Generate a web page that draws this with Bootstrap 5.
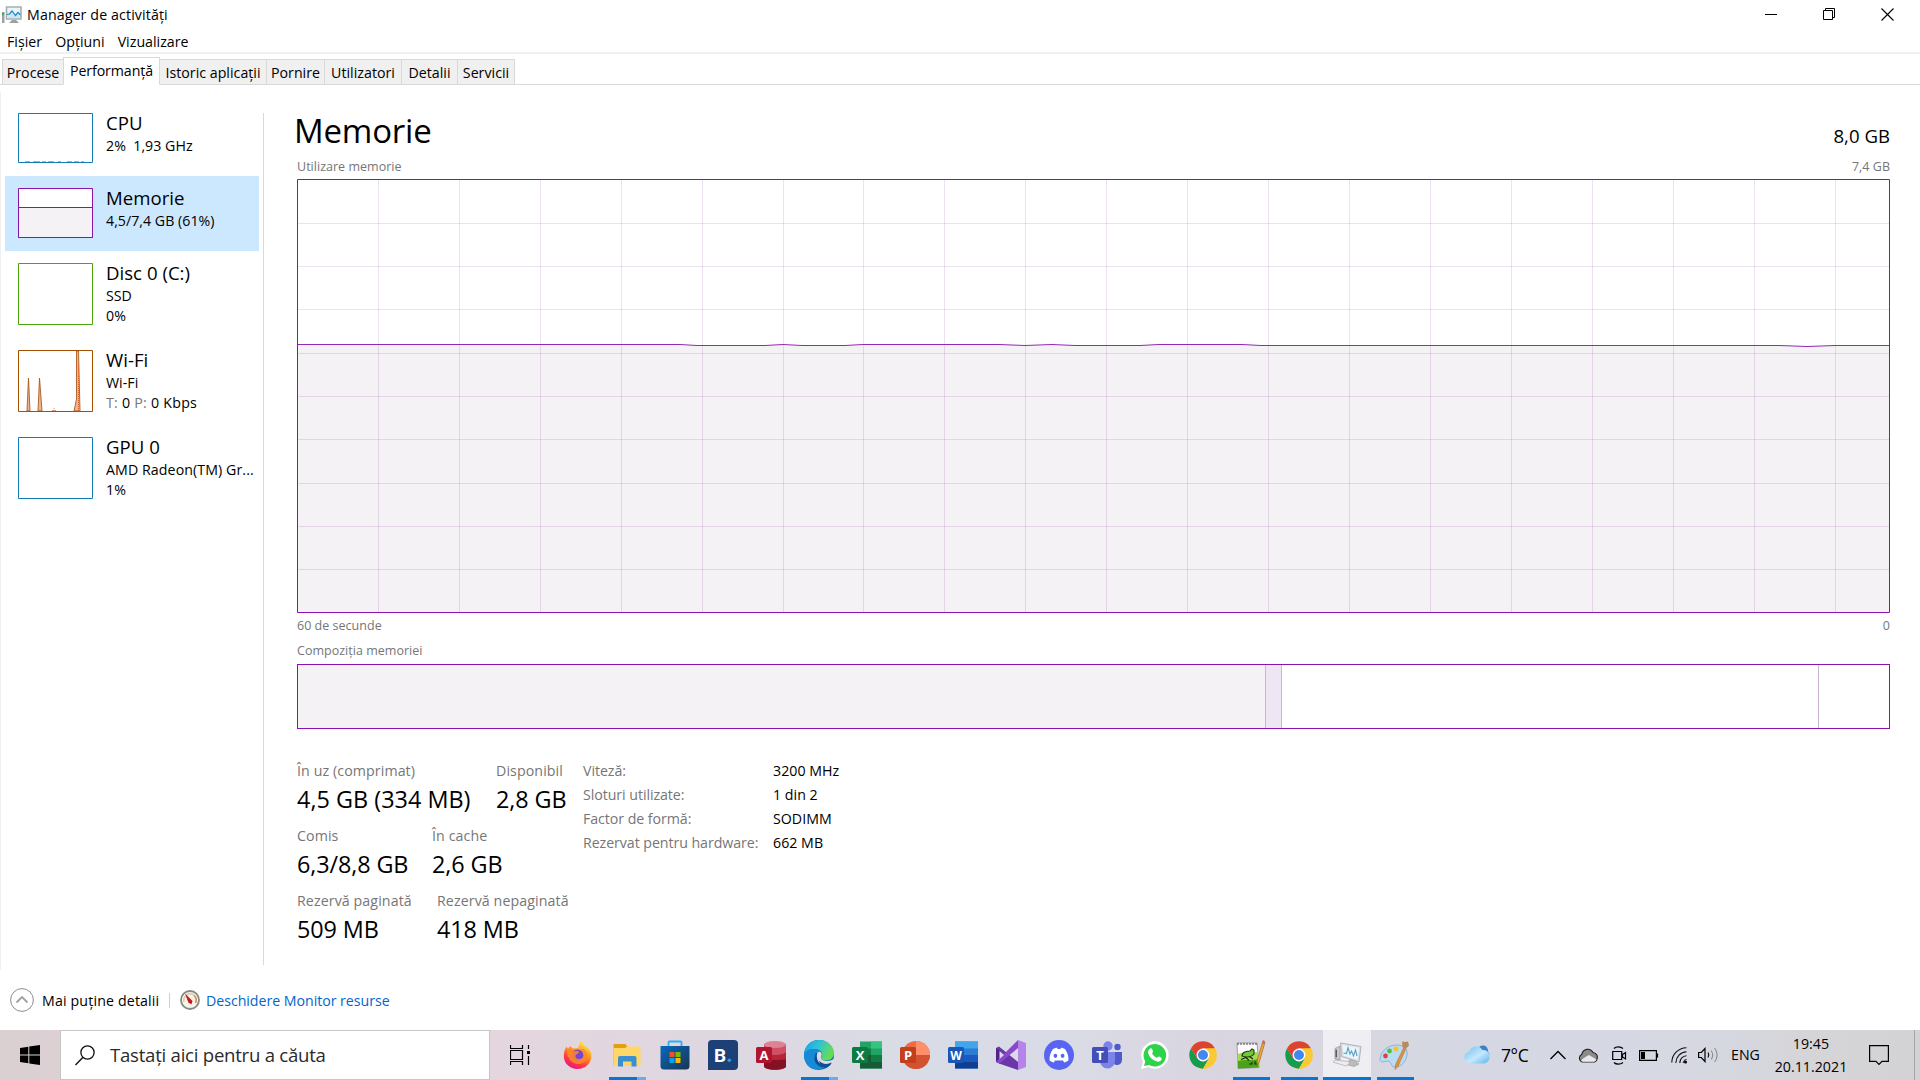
<!DOCTYPE html>
<html lang="ro">
<head>
<meta charset="utf-8">
<title>Manager de activități</title>
<link href="https://cdn.jsdelivr.net/npm/bootstrap@5.3.0/dist/css/bootstrap.min.css" rel="stylesheet">
<style>
html,body{height:1080px;overflow:hidden}
body{font-family:"Open Sans","Noto Sans",sans-serif;font-size:14.2px;line-height:20px;color:#000;background:#fff;letter-spacing:.02px;white-space:nowrap}
svg{display:block;flex:none}
.titlebar{height:30px;padding-left:2px}
.win-title{margin-left:5px;letter-spacing:.12px}
.win-controls{gap:45px;padding-right:26px;margin-top:-2px}
.menubar{height:24px;padding-left:7px;border-bottom:2px solid #f0f0f0;line-height:23px;gap:13px}
.tabstrip{height:31px;border-bottom:1px solid #d9d9d9;padding-left:2px}
.tabstrip .nav-link{padding:1px 0 0;border:1px solid #d9d9d9;border-left-width:0;border-radius:0;background:#f0f0f0;color:#000;height:26px;line-height:24px;text-align:center;margin:0 0 -1px}
.tabstrip .nav-item:first-child .nav-link{border-left-width:1px}
.tabstrip .nav-link.active{height:28px;background:#fff;border-color:#d9d9d9 #d9d9d9 #fff;color:#000;padding:0;border-left-width:1px;margin-left:-1px;line-height:25px;letter-spacing:-.1px}
.workarea{height:885px;padding-top:7px}
.sidebar-edge{border-left:1px solid #f0f0f0;height:878px;width:263px;padding:9px 0 0 4px}
.perf-list{width:254px}
.perf-item{height:87px;padding:12px 0 0 13px;border:0;border-radius:0;background:none;gap:13px;color:#000}
.perf-item.short{height:75px}
.perf-item.selected{background:#cce8ff}
.perf-name{font-size:18.6px;line-height:26px}
.perf-text{margin-top:-3px;width:153px;overflow:hidden}
.muted-g{color:#767676}
.split{width:1px;background:#d9d9d9;height:852px;margin-top:21px}
.main-pane{width:1593px;margin-left:33px;padding-top:17px}
.page-title{font-size:33px;line-height:44px;margin:0 0 0 -3px;font-weight:400;letter-spacing:-.2px}
.total{font-size:18.6px}
.cap-line{font-size:12.5px;line-height:20px;color:#767676}
.comp-bar{height:65px;border:1px solid #8b12ae;margin-top:3px}
.seg{border-right:1px solid #cdb2d9}
.stats{margin-top:30px}
.stat-row{height:65px}
.stat-label{line-height:24px;color:#767676;letter-spacing:.1px}
.stat-value{font-size:23.4px;line-height:32px;letter-spacing:-.1px}
.hw{margin:0 0 0 -1px;line-height:24px}
.hw-k{width:190px;color:#767676;letter-spacing:-.06px}
.footer-bar{height:60px;padding-left:10px}
.footer-link{color:#0066cc;text-decoration:none;letter-spacing:-.04px}
.taskbar{height:50px;background:linear-gradient(90deg,#dacfd1 0,#e4d6de 500px,#dfd7e0 700px,#d8dce6 930px,#d9dbe5 1080px,#d9d5e0 1220px,#d5d8e2 1460px,#d6d8e2 1680px,#d5d5d8 1820px,#d3d3d5)}
.start{width:60px}
.searchbox{width:430px;height:50px;background:#fff;border:1px solid #c6c6c8;padding-left:14px;color:#2b2b2b;font-size:18.6px;letter-spacing:-.25px}
.taskview{width:65px;padding-left:20px}
.task{width:48px;height:50px;position:relative}
.task.on{background:#eeeef3}
.task .run{position:absolute;bottom:0;left:6px;width:37px;height:3px;background:#0078d4}
.task.on .run{left:0;width:48px}
.task .run.multi{background:linear-gradient(90deg,#0078d4 28px,#69aee6 28px)}
.tray{color:#000}
.clock{line-height:23px;width:90px;text-align:center}
</style>
<script src="https://cdn.jsdelivr.net/npm/bootstrap@5.3.0/dist/js/bootstrap.bundle.min.js"></script>
</head>
<body>
<svg width="0" height="0" class="position-absolute">
<defs>
<linearGradient id="gFire" x1=".8" y1="0" x2=".3" y2="1"><stop offset="0" stop-color="#fff44f"/><stop offset=".4" stop-color="#ff9a1f"/><stop offset=".75" stop-color="#ff3647"/><stop offset="1" stop-color="#e31587"/></linearGradient>
<linearGradient id="gStore" x1="0" y1="0" x2="1" y2="1"><stop offset="0" stop-color="#0669bd"/><stop offset="1" stop-color="#1c3453"/></linearGradient>
<linearGradient id="gEdge" x1="0" y1="0" x2="1" y2=".35"><stop offset="0" stop-color="#1b9de2"/><stop offset=".5" stop-color="#2fc2d6"/><stop offset="1" stop-color="#64dd55"/></linearGradient>
<linearGradient id="gCloud" x1="0" y1="0" x2="1" y2="1"><stop offset="0" stop-color="#6dc1f2"/><stop offset=".55" stop-color="#c5e8fb"/><stop offset="1" stop-color="#5bb4ee"/></linearGradient>
<symbol id="chrome" viewBox="0 0 28 28"><circle cx="14" cy="14" r="13.7" fill="#fcc934"/><path d="M2.1 7.2A13.7 13.7 0 0 0 14 27.7L20 17.3 14 20.5 8.1 17.2z" fill="#169c50"/><path d="M14 7.3h11.9A13.7 13.7 0 0 1 14 27.7l5.9-10.3z" fill="#fcc934"/><path d="M2.1 7.2A13.7 13.7 0 0 1 25.900 7.200H14L8 11v6z" fill="#dc4335"/><circle cx="14" cy="14" r="6.400" fill="#fff"/><circle cx="14" cy="14" r="5" fill="#4287f2"/></symbol>
</defs>
</svg>

<header>
  <div class="titlebar d-flex align-items-center">
    <svg width="20" height="18" viewBox="0 0 20 18"><path d="M4.500 1h14.500v12H4.500z" fill="#e4f5fc" stroke="#a9aeb1" stroke-width="1.600"/><path d="M5 9l4-4 4 4 2-2 3 3v2H5z" fill="#c5e9f7"/><path d="M5 8.500l2.500-.5L10 5l3.500 4.500 2.500-3L18.500 9" fill="none" stroke="#2387bf" stroke-width="1.200"/><path d="M10 14h4l3 3H7z" fill="#9b9fa2"/><path d="M0 6h2.500v11H0z" fill="#9da1a4"/><path d="M0 7h2v2H0z" fill="#2fae3c"/></svg>
    <div class="win-title">Manager de activități</div>
    <div class="win-controls d-flex ms-auto">
      <svg width="13" height="13" viewBox="0 0 13 13"><path d="M0 6.500h12" stroke="#000"/></svg>
      <svg width="13" height="13" viewBox="0 0 13 13"><path d="M.5 2.500h9v9h-9zM2.500 2.500v-2h9v9h-2" fill="none" stroke="#000"/></svg>
      <svg width="13" height="13" viewBox="0 0 13 13"><path d="M.5.500l12 12M12.500.500l-12 12" stroke="#000" stroke-width="1.100"/></svg>
    </div>
  </div>
  <nav class="menubar d-flex"><span>Fișier</span><span>Opțiuni</span><span>Vizualizare</span></nav>
  <ul class="tabstrip nav nav-tabs align-items-end flex-nowrap">
    <li class="nav-item"><a class="nav-link" style="width:62px">Procese</a></li>
    <li class="nav-item"><a class="nav-link active" style="width:97px">Performanță</a></li>
    <li class="nav-item"><a class="nav-link" style="width:107px">Istoric aplicații</a></li>
    <li class="nav-item"><a class="nav-link" style="width:58px">Pornire</a></li>
    <li class="nav-item"><a class="nav-link" style="width:77px">Utilizatori</a></li>
    <li class="nav-item"><a class="nav-link" style="width:56px">Detalii</a></li>
    <li class="nav-item"><a class="nav-link" style="width:57px">Servicii</a></li>
  </ul>
</header>

<div class="workarea d-flex">
  <aside class="sidebar-edge">
    <div class="perf-list list-group list-group-flush">
      <div class="perf-item short list-group-item d-flex">
        <svg width="75" height="50" viewBox="0 0 75 50"><path d="M.5.500h74v49H.5z" fill="#fff" stroke="#117dbb"/><path d="M7 48.500h5m3 0h7m2 0h4m2 0h6m4 0h3m6 0h5m2 0h5m2 0h3" stroke="#117dbb" opacity=".5"/></svg>
        <div class="perf-text"><div class="perf-name">CPU</div><div>2%&nbsp; 1,93 GHz</div></div>
      </div>
      <div class="perf-item short selected list-group-item d-flex">
        <svg width="75" height="50" viewBox="0 0 75 50"><path d="M.5.500h74v49H.5z" fill="#fff"/><path d="M.5 19.500h74v30H.5z" fill="#f4f2f4" stroke="#8b12ae"/><path d="M.5.500h74v49H.5z" fill="none" stroke="#8b12ae"/></svg>
        <div class="perf-text"><div class="perf-name">Memorie</div><div>4,5/7,4 GB (61%)</div></div>
      </div>
      <div class="perf-item list-group-item d-flex">
        <svg width="75" height="62" viewBox="0 0 75 62"><path d="M.5.500h74v61H.5z" fill="#fff" stroke="#4da60c"/></svg>
        <div class="perf-text"><div class="perf-name">Disc 0 (C:)</div><div>SSD</div><div>0%</div></div>
      </div>
      <div class="perf-item list-group-item d-flex">
        <svg width="75" height="62" viewBox="0 0 75 62"><path d="M9 61l1.500-33L12 61zM20 61l1.500-33L24 61zM56 61l2.500-12V1h2L62 61z" fill="#e9b797" stroke="#ab5a1c" stroke-width=".9"/><path d="M60.500 14v47" stroke="#d4622c" stroke-dasharray="1 1"/><path d="M34 60.500h4M36 58v1" stroke="#e38e70"/><path d="M.5.500h74v61H.5z" fill="none" stroke="#a74f01"/></svg>
        <div class="perf-text"><div class="perf-name">Wi-Fi</div><div>Wi-Fi</div><div style="letter-spacing:.25px"><span class="muted-g">T:</span> 0 <span class="muted-g">P:</span> 0 Kbps</div></div>
      </div>
      <div class="perf-item list-group-item d-flex">
        <svg width="75" height="62" viewBox="0 0 75 62"><path d="M.5.500h74v61H.5z" fill="#fff" stroke="#117dbb"/></svg>
        <div class="perf-text"><div class="perf-name">GPU 0</div><div style="letter-spacing:.08px">AMD Radeon(TM) Gr...</div><div>1%</div></div>
      </div>
    </div>
  </aside>
  <div class="split"></div>

  <main class="main-pane">
    <div class="d-flex justify-content-between align-items-baseline">
      <h1 class="page-title">Memorie</h1><span class="total">8,0 GB</span>
    </div>
    <div class="cap-line d-flex justify-content-between mt-1"><span>Utilizare memorie</span><span>7,4 GB</span></div>
    <svg class="usage-chart" style="margin-top:2px" width="1593" height="434" viewBox="0 0 1593 434">
      <path d="M0 165.500H383L400 166.500H468L486 165.500 505 166.500H548L566 165.500H702L728 166.500 755 165.500 778 166.500H843L862 165.500H945L964 166.500H1483L1510 167.500 1538 166.500H1593V434H0z" fill="#f4f2f4"/>
      <path d="M81.500 0v434M162.500 0v434M243.500 0v434M324.500 0v434M405.500 0v434M486.500 0v434M566.500 0v434M647.500 0v434M728.500 0v434M809.500 0v434M890.500 0v434M971.500 0v434M1052.500 0v434M1133.500 0v434M1214.500 0v434M1295.500 0v434M1376.500 0v434M1457.500 0v434M1538.500 0v434M0 44.500h1593M0 87.500h1593M0 130.500h1593M0 174.500h1593M0 217.500h1593M0 260.500h1593M0 304.500h1593M0 347.500h1593M0 390.500h1593" stroke="#84309c" stroke-opacity=".15" fill="none"/>
      <path d="M0 165.500H383L400 166.500H468L486 165.500 505 166.500H548L566 165.500H702L728 166.500 755 165.500 778 166.500H843L862 165.500H945L964 166.500H1483L1510 167.500 1538 166.500H1593" fill="none" stroke="#9528b4"/>
      <path d="M.5.500h1592v433H.5z" fill="none" stroke="#8b12ae"/>
    </svg>
    <div class="cap-line d-flex justify-content-between" style="margin-top:3px"><span>60 de secunde</span><span>0</span></div>
    <div class="cap-line" style="margin-top:5px">Compoziția memoriei</div>
    <div class="comp-bar d-flex">
      <div class="seg" style="width:968px;background:#f4f2f4"></div>
      <div class="seg" style="width:16px;background:#eee6f3"></div>
      <div class="seg" style="width:537px"></div>
    </div>
    <div class="stats d-flex">
      <div style="width:287px">
        <div class="stat-row d-flex">
          <div style="width:199px"><div class="stat-label">În uz (comprimat)</div><div class="stat-value" style="letter-spacing:.02px">4,5 GB (334 MB)</div></div>
          <div><div class="stat-label">Disponibil</div><div class="stat-value">2,8 GB</div></div>
        </div>
        <div class="stat-row d-flex">
          <div style="width:135px"><div class="stat-label">Comis</div><div class="stat-value">6,3/8,8 GB</div></div>
          <div><div class="stat-label">În cache</div><div class="stat-value">2,6 GB</div></div>
        </div>
        <div class="stat-row d-flex">
          <div style="width:140px"><div class="stat-label">Rezervă paginată</div><div class="stat-value">509 MB</div></div>
          <div><div class="stat-label">Rezervă nepaginată</div><div class="stat-value">418 MB</div></div>
        </div>
      </div>
      <div class="hw">
        <div class="d-flex"><span class="hw-k">Viteză:</span><span>3200 MHz</span></div>
        <div class="d-flex"><span class="hw-k">Sloturi utilizate:</span><span>1 din 2</span></div>
        <div class="d-flex"><span class="hw-k">Factor de formă:</span><span>SODIMM</span></div>
        <div class="d-flex"><span class="hw-k">Rezervat pentru hardware:</span><span>662 MB</span></div>
      </div>
    </div>
  </main>
</div>

<footer class="footer-bar d-flex align-items-center">
  <svg width="24" height="24" viewBox="0 0 24 24"><circle cx="12" cy="12" r="11.400" fill="#fff" stroke="#8c8c8c"/><path d="M6.500 14.500L12 9l5.500 5.500" fill="none" stroke="#a0a0a0" stroke-width="1.800"/></svg>
  <span style="margin:1px 0 0 8px;width:117px;letter-spacing:.15px">Mai puține detalii</span>
  <span style="margin:0 10px;width:1px;height:15px;background:#d0d0d0"></span>
  <svg width="20" height="20" viewBox="0 0 20 20"><circle cx="10" cy="10" r="9" fill="#f6f3ea" stroke="#858b86" stroke-width="1.800"/><path d="M4 12A6.500 6.500 0 0 1 13 4.500 6.500 6.500 0 0 1 16 12" fill="none" stroke="#d8c9a8" stroke-width="1.400"/><path d="M14 5.500A6.500 6.500 0 0 1 15.500 13" fill="none" stroke="#e28a4c" stroke-width="1.400"/><path d="M5 3.500l7.500 7.500-1 3.200-3-1.500z" fill="#c8141c"/></svg>
  <a class="footer-link" style="margin:1px 0 0 6px">Deschidere Monitor resurse</a>
</footer>

<div class="taskbar d-flex align-items-center">
  <div class="start d-flex justify-content-center"><svg width="20" height="20" viewBox="0 0 20 20"><path d="M0 2.900l8.300-1.200v7.800H0zM9.300 1.500L20 0v9.500H9.300zM0 10.500h8.300v7.800L0 17.100zM9.300 10.500H20V20L9.300 18.500z"/></svg></div>
  <div class="searchbox d-flex align-items-center">
    <svg width="20" height="21" viewBox="0 0 20 21"><circle cx="12.500" cy="7.500" r="6.600" fill="none" stroke="#111" stroke-width="1.300"/><path d="M8 12.300L.5 20" stroke="#111" stroke-width="1.400"/></svg>
    <span style="margin-left:15px">Tastați aici pentru a căuta</span>
  </div>
  <div class="taskview"><svg width="21" height="20" viewBox="0 0 21 20"><path d="M.5 0v3.500h12V0M.5 20v-3.500h12V20M.5 5.500h12v9H.5zM18.500 0v4M18.500 11v9" fill="none" stroke="#000" stroke-width="1.200"/><path d="M17 6h3v3h-3z"/></svg></div>

  <div class="task d-flex align-items-center justify-content-center"><svg style="margin-left:-2px" width="30" height="30" viewBox="0 0 30 30"><path d="M18 1c2 1.500 3 3 3.600 5 5 2 7 6 6.800 10.500C28 24 22 29 14.500 29S.8 23.500.8 16C.8 12 2 9 3.600 6.500L5 9l2-3 3 2.500 5-.5c1-3 1.500-5 3-7z" fill="url(#gFire)"/><circle cx="14.500" cy="15.500" r="6" fill="#7843d6"/><path d="M3.500 9l5 2.500 5.500-.5c1 0 2 .5 2 1.500-1 1.500-3 1.500-3.500 3-.5 2 1 3.500 3.500 3.500 3.500 0 5.500-2.500 4.500-6-1-2-2.500-3-4.500-3.500 5-1.500 8 1.500 8 6 0 6-5 9-10 8.500S4 18.500 3.500 9z" fill="#ff8b23" opacity=".85"/></svg></div>
  <div class="task d-flex align-items-center justify-content-center"><svg width="28" height="26" viewBox="0 0 28 26"><path d="M.5 2h12l2 3H27v19H.5z" fill="#e0a010"/><path d="M.5 6H12l2-1.500H27.500V24H.5z" fill="#ffd767"/><path d="M5 24.500V16a2 2 0 0 1 2-2h14.500a2 2 0 0 1 2 2v8.500h-5V19.500H10v5z" fill="#3a8fd2"/></svg><span class="run multi"></span></div>
  <div class="task d-flex align-items-center justify-content-center"><svg width="30" height="30" viewBox="0 0 30 30"><path d="M8.500 7V2.500a1 1 0 0 1 1-1h11a1 1 0 0 1 1 1V7" fill="none" stroke="#28b0f0" stroke-width="1.800"/><path d="M.5 6h29v20a3.500 3.500 0 0 1-3.500 3.500H4A3.500 3.500 0 0 1 .5 26z" fill="url(#gStore)"/><path d="M9.500 12h5v5h-5z" fill="#f25022"/><path d="M15.500 12h5v5h-5z" fill="#7fba00"/><path d="M9.500 18h5v5h-5z" fill="#00a4ef"/><path d="M15.500 18h5v5h-5z" fill="#ffb900"/></svg></div>
  <div class="task d-flex align-items-center justify-content-center"><svg width="30" height="30" viewBox="0 0 30 30"><path d="M4 0h22a4 4 0 0 1 4 4v22a4 4 0 0 1-4 4H0V4a4 4 0 0 1 4-4z" fill="#1d4077"/><text x="6" y="21.500" font-size="19" font-weight="700" fill="#fff" font-family="Roboto">B</text><circle cx="21.300" cy="20.300" r="1.800" fill="#1da1f2"/></svg></div>
  <div class="task d-flex align-items-center justify-content-center"><svg width="30" height="30" viewBox="0 0 30 30"><path d="M8 4h22v22c0 5-22 5-22 0z" fill="#a51e38"/><path d="M8 20h22v6c0 5-22 5-22 0z" fill="#851223"/><path d="M8 11h22v6c0 4-22 4-22 0z" fill="#b8243a"/><path d="M8 4v8c3 4 19 4 22 0V4z" fill="#cf5165"/><ellipse cx="19" cy="4.500" rx="11" ry="3.500" fill="#e08294"/><rect y="7" width="16" height="16" rx="1.500" fill="#b01530"/><text x="8" y="19.500" text-anchor="middle" font-size="13" font-weight="700" fill="#fff">A</text></svg></div>
  <div class="task d-flex align-items-center justify-content-center"><svg width="30" height="30" viewBox="0 0 30 30"><circle cx="15" cy="15" r="15" fill="#116ab8"/><path d="M0 14C1 5 7 0 15 0c9 0 15 6.500 15 13 0 5-4 7.500-8 7.500-4 0-5.500-1.500-5-3s1.500-2 1-4c-.5-3-4-4.500-7.500-4.500C5.500 9 1.500 11 0 14z" fill="url(#gEdge)"/><path d="M0 14c2-4 6-5 10-5 3.500 0 6.500 1.500 7.500 3.500-3-1-6 1-6 5 0 6 5 10 10.500 8.500C15 32 6 30 2.500 24A16 16 0 0 1 0 14z" fill="#168ad6"/><path d="M12 13c-3 5-2 11 5 14 4 1 8-.5 10.500-4-5 2-10 .5-12-3-1.500-2.500-1-5 .5-7z" fill="#0c4f92"/><path d="M13.500 12.500c2.500-2 5 .5 4 3-1.500 2.500-.5 5 4.500 5.500 4 .2 6.500-1 8-2.500l.5 3-2.500 2.500c-6 3-12.500 1-14.500-4-1-3-.8-6 0-7.500z" fill="#dcdae4"/><path d="M27.800 22.500c-5 2.500-10 1.500-12.800-2 1 5 4.500 7.500 7.500 7 2.500-1 4.500-3 5.300-5z" fill="#0c4f92"/></svg><span class="run multi"></span></div>
  <div class="task d-flex align-items-center justify-content-center"><svg width="30" height="30" viewBox="0 0 30 30"><path d="M8 1.500h22v27H8z" fill="#21a366"/><path d="M19 1.500h11v7H19z" fill="#33c481"/><path d="M8 8.500h11V15H8z" fill="#107c41"/><path d="M8 15h11v7H8z" fill="#185c37"/><path d="M19 15h11v7H19z" fill="#107c41"/><path d="M8 22h22v6.500H8z" fill="#185c37"/><rect y="7" width="16" height="16" rx="1.500" fill="#0f7a3f"/><text x="8" y="19.500" text-anchor="middle" font-size="13" font-weight="700" fill="#fff">X</text></svg></div>
  <div class="task d-flex align-items-center justify-content-center"><svg width="30" height="30" viewBox="0 0 30 30"><circle cx="16" cy="15" r="14" fill="#ed6c47"/><path d="M16 1a14 14 0 0 1 14 14H16z" fill="#ff8f6b"/><path d="M2 15h28a14 14 0 0 1-28 0z" fill="#d35230"/><rect y="7" width="16" height="16" rx="1.500" fill="#c43e1c"/><text x="8" y="19.500" text-anchor="middle" font-size="13" font-weight="700" fill="#fff">P</text></svg></div>
  <div class="task d-flex align-items-center justify-content-center"><svg width="30" height="30" viewBox="0 0 30 30"><path d="M7 1.500h23v27H7z" fill="#2b7cd3"/><path d="M7 1.500h23v7H7z" fill="#41a5ee"/><path d="M7 15h23v7H7z" fill="#185abd"/><path d="M7 22h23v6.500H7z" fill="#103f91"/><rect y="7" width="16" height="16" rx="1.500" fill="#1a56b8"/><text x="8" y="19.500" text-anchor="middle" font-size="12" font-weight="700" fill="#fff">W</text></svg></div>
  <div class="task d-flex align-items-center justify-content-center"><svg width="30" height="30" viewBox="0 0 30 30"><path d="M0 8l3-1.500L22 22v8L3 23.500 0 22z" fill="#6a36a8"/><path d="M0 22V8l4 3v8z" fill="#52218a"/><path d="M22 0v8L3.500 23.500 0 22z" fill="#8a49c8"/><path d="M22 0l8 3v24l-8 3z" fill="#b583ea"/><path d="M22 9.500v11L15 15zM3.500 11v8L8 15z" fill="#dadbe5"/></svg></div>
  <div class="task d-flex align-items-center justify-content-center"><svg width="30" height="30" viewBox="0 0 30 30"><circle cx="15" cy="15" r="15" fill="#5865f2"/><path d="M9 9c2-1 3-1.200 4-1.300l.6 1.200h2.800l.6-1.200c1 .1 2 .3 4 1.300 2.500 3.500 3.800 7.500 3.400 11.400-1.500 1.100-3 1.700-4.200 2l-1.200-1.900H11l-1.200 1.900c-1.200-.3-2.700-.9-4.200-2C5.200 16.500 6.500 12.500 9 9z" fill="#fff"/><ellipse cx="11.400" cy="15.800" rx="1.900" ry="2.100" fill="#5865f2"/><ellipse cx="18.600" cy="15.800" rx="1.900" ry="2.100" fill="#5865f2"/></svg></div>
  <div class="task d-flex align-items-center justify-content-center"><svg width="30" height="30" viewBox="0 0 30 30"><circle cx="25.500" cy="7" r="3.200" fill="#5059c9"/><path d="M20 12h10v8a5 5 0 0 1-8 4z" fill="#5059c9"/><circle cx="16" cy="6" r="4.700" fill="#7b83eb"/><path d="M8 12h15v9a7.500 7.500 0 0 1-15 0z" fill="#7b83eb"/><rect y="7" width="16" height="16" rx="1.500" fill="#454db8"/><text x="8" y="19.500" text-anchor="middle" font-size="13" font-weight="700" fill="#fff">T</text></svg></div>
  <div class="task d-flex align-items-center justify-content-center"><svg width="28" height="28" viewBox="0 0 28 28"><path d="M0 28l2-7.200A13.700 13.700 0 1 1 7.200 26z" fill="#fff"/><path d="M3 25l1.300-4.600A11.300 11.300 0 1 1 8 24z" fill="#2dd44a"/><path d="M9.200 7.500c.8-.6 1.500-.3 1.800.4l1 2.300c.2.800-.5 1.300-1 2 1.200 2.200 2.700 3.500 5 4.500.8-.5 1.200-1.500 2-1.200l2.300 1.200c.6.400.4 1.800-.1 2.500-1.700 2-4 1.600-6.200.6-3-1.300-5.500-3.800-6.700-7-.8-2.200.2-4.300 1.900-5.300z" fill="#fff"/></svg></div>
  <div class="task d-flex align-items-center justify-content-center"><svg width="28" height="28"><use href="#chrome"/></svg></div>
  <div class="task d-flex align-items-center justify-content-center"><svg width="30" height="30" viewBox="0 0 30 30"><path d="M1 3h20l2 24.500-21 1z" fill="#fbfbfb" stroke="#8a8a8a" stroke-width=".8"/><path d="M1.500 14c5-2 12-1 20.500-2l1 15-21 1z" fill="#a5da52"/><path d="M2 21c6-2 14 0 20.500-2v8.500l-20.500 1z" fill="#4ba317"/><path d="M2 3v2m3-2v2m3-2v2m3-2v2m3-2v2m3-2v2m3-2v2" stroke="#444"/><path d="M6 16c0-4 5-5 8-5l2-2 2 1v4c-2 3-7 4-12 2z" fill="#6ecb35" stroke="#203d15" stroke-width="1.100"/><path d="M5 19.500l5-2 3 3M14 17l3 2M13 24h3v-2M19 21v3h2" stroke="#182810" stroke-width="1.100" fill="none"/><path d="M27 1l2 1.200-5.500 19-2.300 4v-5z" fill="#f2ad3c" stroke="#9a6519" stroke-width=".7"/><path d="M27 0l2 1.200-1 3-2.200-1z" fill="#d36868"/></svg><span class="run"></span></div>
  <div class="task d-flex align-items-center justify-content-center"><svg width="28" height="28"><use href="#chrome"/></svg><span class="run"></span></div>
  <div class="task on d-flex align-items-center justify-content-center"><svg width="30" height="28" viewBox="0 0 30 28"><path d="M3 7.500l5-2.500v14L3 18z" fill="#c9cbcc" stroke="#8d8f90" stroke-width=".7"/><path d="M3.500 9l1.500-.4v8L3.500 16z" fill="#595d60"/><path d="M8.500 2l20.500 3.500-2 15.500-17.500-5.500z" fill="#dddfe0" stroke="#9b9ea0" stroke-width=".7"/><path d="M10.500 4l16.500 2.800-1.500 12L11.500 14.500z" fill="#e8f6fd"/><path d="M11.500 12l3 .5 1.500-6 2 6.500 1.500-3 2 5 2-6 1.500 6" stroke="#5f9fc4" fill="none" stroke-width="1.100"/><path d="M18 18.500l5 1.500 4 3-5 2.500-8-2z" fill="#b9bbbd" stroke="#999" stroke-width=".6"/><path d="M3 19l13 1.500 2 1.500-4 3L1 21z" fill="#ededed" stroke="#aaa" stroke-width=".7"/></svg><span class="run"></span></div>
  <div class="task d-flex align-items-center justify-content-center"><svg width="32" height="30" viewBox="0 0 32 30"><path d="M1 19C2 10 10 5 18 5c7 0 11 4 10 10-1 7-6 12-12 12-4 0-3-3-5-5-3-3-10 3-10-3z" fill="#b9dcf3" stroke="#7ba8cc" stroke-width=".8"/><circle cx="6.500" cy="16" r="2.400" fill="#e2403a"/><circle cx="10.500" cy="11" r="2.400" fill="#58b947"/><circle cx="17" cy="9" r="2.400" fill="#f5c32f"/><path d="M25 7l2 1.500-8 18-3 3 .5-5z" fill="#df8f41" stroke="#b5702a" stroke-width=".5"/><path d="M23 1.500l3 .5 3-.5 1 4-3.500 3.500-3-2z" fill="#b98a5f"/></svg><span class="run"></span></div>

  <div class="tray d-flex align-items-center h-100" style="margin-left:44px">
    <svg width="27" height="20" viewBox="0 0 27 20"><path d="M16 2c4-3 9-1 9 4l1.500 4-6 1z" fill="#3b83c9"/><path d="M6.500 18.500a6 6 0 0 1-.5-11.800C8 1 16-.5 19.500 5c5-.5 7.500 3.500 7 7.500-.5 4-3 6-7 6z" fill="url(#gCloud)"/></svg>
    <span style="margin-left:11px;font-size:17.500px;letter-spacing:-.4px;width:49px">7°C</span>
    <svg width="16" height="10" viewBox="0 0 16 10"><path d="M.5 9L8 1.500 15.500 9" fill="none" stroke="#000" stroke-width="1.300"/></svg>
    <svg style="margin-left:12px" width="20" height="15" viewBox="0 0 20 15"><path d="M4.500 14a4 4 0 0 1-.8-7.500C5 1 12-1 15 4.500c4 .5 5 4 4 6.500-.5 2-2 3-4 3z" fill="#8c8c8c" stroke="#222" stroke-width="1.100"/><path d="M3 13c1.500-3 5-4 8-6l7.500 4.500c-1 2-2 2.300-4 2.300H5z" fill="#e9e9eb"/></svg>
    <svg style="margin-left:14px" width="15" height="19" viewBox="0 0 15 19"><path d="M.7 5.500h9v8h-9zM10.500 8.500l3-2v6.500l-3-2zM2 2.500C4 .3 8.500.3 11 2.500M2 16.500c2 2.200 6.500 2.200 9 0" fill="none" stroke="#000" stroke-width="1.200"/></svg>
    <svg style="margin-left:12px" width="20" height="11" viewBox="0 0 20 11"><path d="M.6.600h16.800v9.800H.6zM18.500 3.500v4" fill="none" stroke="#000" stroke-width="1.200"/><path d="M2 2h4v7H2z"/></svg>
    <svg style="margin-left:12px" width="17" height="17" viewBox="0 0 17 17"><path d="M.8 15.500C1 7.500 7 1 15.500.8M4.800 16C5 10 9.500 5 15.500 4.800M8.800 16c0-4 3-7.200 6.700-7.300" fill="none" stroke="#111" stroke-width="1.100"/><path d="M12.200 16c0-2 1.500-3.500 3.300-3.500" fill="none" stroke="#111"/><circle cx="14.500" cy="15" r="1.500"/></svg>
    <svg style="margin-left:10px" width="21" height="16" viewBox="0 0 21 16"><path d="M.6 5.500h2.700l3.700-4v13l-3.700-4H.6z" fill="none" stroke="#000" stroke-width="1.200"/><path d="M10 5.500c1 1.500 1 3.500 0 5" fill="none" stroke="#000" stroke-width="1.100"/><path d="M13 3.500c2.300 2.500 2.300 6.500 0 9M16.500 1c3.500 4 3.500 10 0 14" fill="none" stroke="#8c8c90" stroke-width="1.100"/></svg>
    <span style="margin-left:12px;width:35px">ENG</span>
    <div class="clock"><div>19:45</div><div>20.11.2021</div></div>
    <svg style="margin-left:13px" width="20" height="20" viewBox="0 0 20 20"><path d="M.6.600h18.800v15.800H13l-3 3-3-3H.6z" fill="none" stroke="#000" stroke-width="1.200"/></svg>
    <span style="margin-left:25px;width:1px;height:50px;background:#a6a6aa"></span>
  </div>
</div>
</body>
</html>
